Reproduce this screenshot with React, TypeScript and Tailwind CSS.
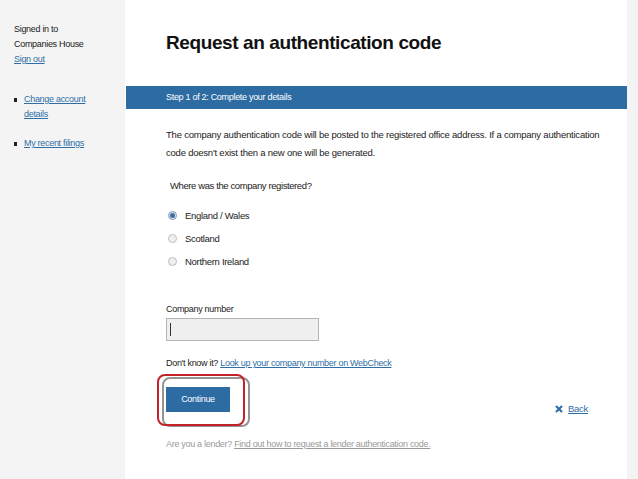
import { X } from 'lucide-react'

const font = "font-['Liberation_Sans',Arial,sans-serif]"

function Radio({ label, checked }: { label: string; checked?: boolean }) {
  return (
    <div className="flex items-center h-[23px]">
      <span
        className={`w-[9px] h-[9px] rounded-full border mr-[8px] flex items-center justify-center ${
          checked ? 'border-[#7d9dbf] bg-[#dbe6f1]' : 'border-[#bdbdbd] bg-[#f0f0f0]'
        }`}
      >
        {checked && <span className="w-[5px] h-[5px] rounded-full bg-[#416f9c]" />}
      </span>
      <span className="text-[9.5px] leading-[14px] tracking-[-0.3px] text-[#222]">{label}</span>
    </div>
  )
}

export default function App() {
  return (
    <div className={`flex h-[479px] w-[638px] overflow-hidden ${font} text-[#1a1a1a]`}>
      {/* sidebar */}
      <aside className="w-[125px] shrink-0 bg-[#f4f4f4] px-[14px] pt-[22px] text-[9px] leading-[15px] tracking-[-0.3px]">
        <p>Signed in to</p>
        <p>Companies House</p>
        <a className="text-[#2f6fa8] underline">Sign out</a>
        <ul className="mt-[25px] space-y-[14px]">
          <li className="flex">
            <span className="w-[3px] h-[4px] bg-[#222] mt-[6px] mr-[7px] shrink-0" />
            <a className="text-[#2f6fa8] underline">
              Change account
              <br />
              details
            </a>
          </li>
          <li className="flex">
            <span className="w-[3px] h-[4px] bg-[#222] mt-[6px] mr-[7px] shrink-0" />
            <a className="text-[#2f6fa8] underline">My recent filings</a>
          </li>
        </ul>
      </aside>

      {/* main */}
      <main className="flex-1 bg-white pl-[1px]">
        <h1 className="pl-[40px] pt-[31px] h-[86px] text-[19px] font-bold tracking-[-0.4px] text-[#111] leading-[24px]">
          Request an authentication code
        </h1>
        <div className="h-[23px] bg-[#2d6ba3] pl-[40px] flex items-center text-[9px] tracking-[-0.3px] text-white">
          Step 1 of 2: Complete your details
        </div>

        <div className="pl-[40px] pr-[20px]">
          <p className="mt-[17px] text-[9.5px] leading-[18px] tracking-[-0.22px] text-[#222] whitespace-nowrap">
            The company authentication code will be posted to the registered office address. If a company authentication
            <br />
            code doesn't exist then a new one will be generated.
          </p>

          <p className="mt-[17px] pl-[4px] text-[9.5px] leading-[14px] tracking-[-0.4px] text-[#222]">
            Where was the company registered?
          </p>

          <div className="mt-[11px] pl-[2px]">
            <Radio label="England / Wales" checked />
            <Radio label="Scotland" />
            <Radio label="Northern Ireland" />
          </div>

          <label className="block mt-[29px] text-[9px] leading-[14px] tracking-[-0.3px] text-[#222]">
            Company number
          </label>
          <div className="mt-[2px] w-[153px] h-[23px] bg-[#efefef] border border-[#b5b5b5] flex items-center pl-[3px]">
            <span className="w-px h-[13px] bg-[#333]" />
          </div>

          <p className="mt-[15px] text-[9px] leading-[14px] tracking-[-0.3px] text-[#222]">
            Don't know it?{' '}
            <a className="text-[#2f6fa8] underline">Look up your company number on WebCheck</a>
          </p>

          <div className="flex items-start justify-between mt-[4px]">
            <div className="relative ml-[-9px] w-[93px] h-[53px]">
              <div className="absolute left-[5px] top-[3px] w-[88px] h-[50px] rounded-[8px] border-2 border-[#949494]" />
              <div className="absolute left-0 top-0 w-[88px] h-[52px] rounded-[8px] border-2 border-[#c42229]" />
              <button className="absolute left-[9px] top-[13px] w-[64px] h-[25px] bg-[#2d6ba3] text-white text-[9px] tracking-[-0.3px]">
                Continue
              </button>
            </div>
            <a className="mt-[28px] mr-[19px] flex items-center gap-[4px] text-[#2f6fa8] text-[9.5px] leading-[14px] tracking-[-0.3px] underline">
              <X className="w-[10px] h-[10px] text-[#2f6fa8]" strokeWidth={5} />
              Back
            </a>
          </div>

          <p className="mt-[10px] text-[9px] leading-[14px] tracking-[-0.3px] text-[#9a9a9a]">
            Are you a lender?{' '}
            <a className="underline">Find out how to request a lender authentication code.</a>
          </p>
        </div>
      </main>

      <div className="w-[11px] shrink-0 bg-[#f4f4f4]" />
    </div>
  )
}
